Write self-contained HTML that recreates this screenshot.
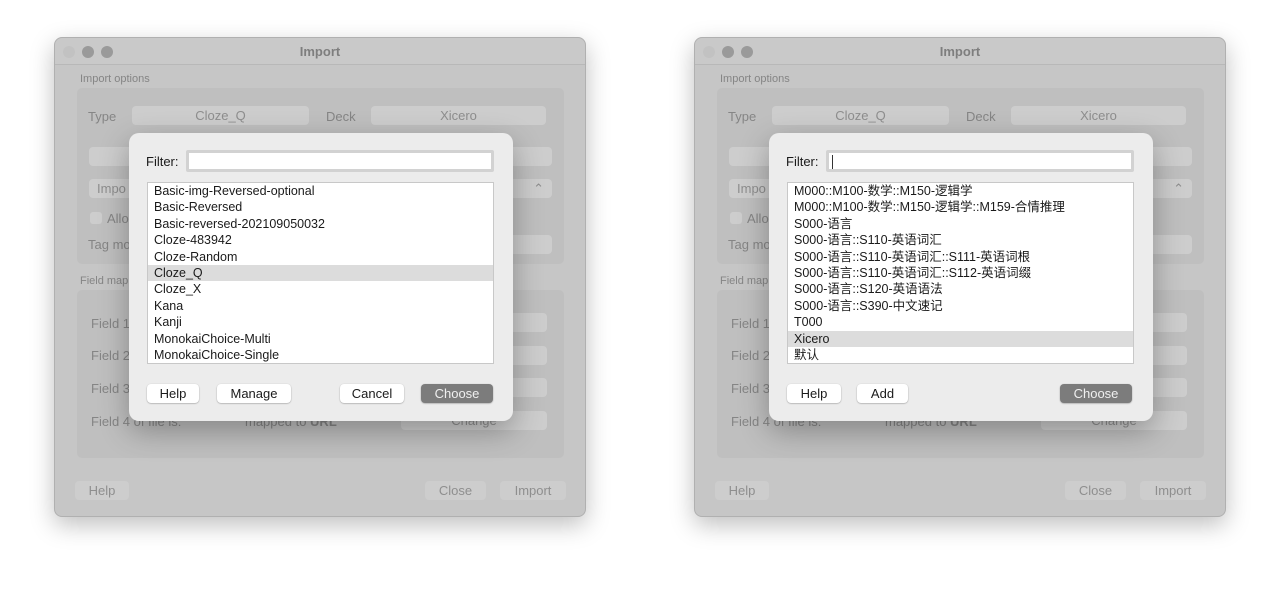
<!DOCTYPE html>
<html><head><meta charset="utf-8"><style>
*{margin:0;padding:0;box-sizing:border-box}
body{width:1280px;height:589px;background:#fff;position:relative;overflow:hidden;font-family:"Liberation Sans","Noto Sans CJK SC",sans-serif;font-size:13px}
.a{position:absolute}
.win{position:absolute;top:37px;width:532px;height:480px;background:#c6c6c6;border-radius:8px;box-shadow:0 8px 24px rgba(0,0,0,.25);border:1px solid #b0b0b0}
.tb{position:absolute;left:0;top:0;right:0;height:27px;border-bottom:1px solid #b8b8b8;background:#c9c9c9;border-radius:8px 8px 0 0}
.title{position:absolute;top:6px;left:0;right:0;text-align:center;color:#7e7e7e;font-weight:bold;font-size:13px}
.dot{position:absolute;top:8px;width:12px;height:12px;border-radius:50%;background:#9a9a9a}
.grp{position:absolute;background:#bfbfbf;border-radius:5px}
.gt{color:#858585}
.gb{position:absolute;height:19px;background:#cdcdcd;border-radius:4px;color:#8e8e8e;text-align:center;line-height:19px;font-size:13px}
.dlg{position:absolute;top:133px;width:384px;height:288px;background:#ececec;border-radius:10px;box-shadow:0 10px 30px rgba(0,0,0,.3)}
.inp{position:absolute;left:57px;top:17px;width:308px;height:22px;background:#fff;border:3px solid #d2d2d2;border-radius:2px}
.list{position:absolute;left:18px;top:49px;width:347px;height:182px;background:#fff;border:1px solid #c8c8c8}
.it{height:16.4px;line-height:16.4px;padding-left:6px;color:#1a1a1a;font-size:12.5px;white-space:nowrap}
.sel{background:#dcdcdc}
.btn{position:absolute;top:251px;height:19px;background:#fff;border-radius:4px;box-shadow:0 0.5px 1.5px rgba(0,0,0,.35);text-align:center;line-height:19px;color:#1a1a1a;font-size:13px}
.btn.p{background:#7c7c7c;color:#f0f0f0}
</style></head><body>

<!-- LEFT -->
<div class="win" style="left:54px">
<div class="tb"><div class="dot" style="left:8px;background:#c2c2c2"></div><div class="dot" style="left:27px"></div><div class="dot" style="left:46px"></div><div class="title">Import</div></div>
<div class="a gt" style="left:25px;top:35px;font-size:11px">Import options</div>
<div class="grp" style="left:22px;top:50px;width:487px;height:176px"></div>
<div class="a gt" style="left:33px;top:71px">Type</div>
<div class="gb" style="left:77px;top:68px;width:177px">Cloze_Q</div>
<div class="a gt" style="left:271px;top:71px">Deck</div>
<div class="gb" style="left:316px;top:68px;width:175px">Xicero</div>
<div class="gb" style="left:34px;top:109px;width:463px"></div>
<div class="gb" style="left:34px;top:141px;width:463px;text-align:left;padding-left:8px">Impo<span style="position:absolute;right:8px">⌃</span></div>
<div class="a" style="left:35px;top:174px;width:12px;height:12px;background:#cdcdcd;border-radius:3px"></div>
<div class="a gt" style="left:52px;top:173px">Allo</div>
<div class="a gt" style="left:33px;top:199px">Tag mo</div>
<div class="gb" style="left:346px;top:197px;width:151px"></div>
<div class="a gt" style="left:25px;top:237px;font-size:11px">Field map</div>
<div class="grp" style="left:22px;top:252px;width:487px;height:168px"></div>
<div class="a gt" style="left:36px;top:278px">Field 1</div><div class="gb" style="left:346px;top:275px;width:146px"></div>
<div class="a gt" style="left:36px;top:310px">Field 2</div><div class="gb" style="left:346px;top:308px;width:146px"></div>
<div class="a gt" style="left:36px;top:343px">Field 3</div><div class="gb" style="left:346px;top:340px;width:146px"></div>
<div class="a gt" style="left:36px;top:376px">Field 4 of file is:</div><div class="a gt" style="left:190px;top:376px">mapped to <b>URL</b></div><div class="gb" style="left:346px;top:373px;width:146px">Change</div>
<div class="gb" style="left:20px;top:443px;width:54px">Help</div>
<div class="gb" style="left:370px;top:443px;width:61px">Close</div>
<div class="gb" style="left:445px;top:443px;width:66px">Import</div>
</div>
<div class="dlg" style="left:129px">
<div class="a" style="left:17px;top:21px;color:#1a1a1a">Filter:</div>
<div class="inp"></div>
<div class="list">
<div class="it">Basic-img-Reversed-optional</div>
<div class="it">Basic-Reversed</div>
<div class="it">Basic-reversed-202109050032</div>
<div class="it">Cloze-483942</div>
<div class="it">Cloze-Random</div>
<div class="it sel">Cloze_Q</div>
<div class="it">Cloze_X</div>
<div class="it">Kana</div>
<div class="it">Kanji</div>
<div class="it">MonokaiChoice-Multi</div>
<div class="it">MonokaiChoice-Single</div>
</div>
<div class="btn" style="left:18px;width:52px">Help</div>
<div class="btn" style="left:88px;width:74px">Manage</div>
<div class="btn" style="left:211px;width:64px">Cancel</div>
<div class="btn p" style="left:292px;width:72px">Choose</div>
</div>

<!-- RIGHT -->
<div class="win" style="left:694px">
<div class="tb"><div class="dot" style="left:8px;background:#c2c2c2"></div><div class="dot" style="left:27px"></div><div class="dot" style="left:46px"></div><div class="title">Import</div></div>
<div class="a gt" style="left:25px;top:35px;font-size:11px">Import options</div>
<div class="grp" style="left:22px;top:50px;width:487px;height:176px"></div>
<div class="a gt" style="left:33px;top:71px">Type</div>
<div class="gb" style="left:77px;top:68px;width:177px">Cloze_Q</div>
<div class="a gt" style="left:271px;top:71px">Deck</div>
<div class="gb" style="left:316px;top:68px;width:175px">Xicero</div>
<div class="gb" style="left:34px;top:109px;width:463px"></div>
<div class="gb" style="left:34px;top:141px;width:463px;text-align:left;padding-left:8px">Impo<span style="position:absolute;right:8px">⌃</span></div>
<div class="a" style="left:35px;top:174px;width:12px;height:12px;background:#cdcdcd;border-radius:3px"></div>
<div class="a gt" style="left:52px;top:173px">Allo</div>
<div class="a gt" style="left:33px;top:199px">Tag mo</div>
<div class="gb" style="left:346px;top:197px;width:151px"></div>
<div class="a gt" style="left:25px;top:237px;font-size:11px">Field map</div>
<div class="grp" style="left:22px;top:252px;width:487px;height:168px"></div>
<div class="a gt" style="left:36px;top:278px">Field 1</div><div class="gb" style="left:346px;top:275px;width:146px"></div>
<div class="a gt" style="left:36px;top:310px">Field 2</div><div class="gb" style="left:346px;top:308px;width:146px"></div>
<div class="a gt" style="left:36px;top:343px">Field 3</div><div class="gb" style="left:346px;top:340px;width:146px"></div>
<div class="a gt" style="left:36px;top:376px">Field 4 of file is:</div><div class="a gt" style="left:190px;top:376px">mapped to <b>URL</b></div><div class="gb" style="left:346px;top:373px;width:146px">Change</div>
<div class="gb" style="left:20px;top:443px;width:54px">Help</div>
<div class="gb" style="left:370px;top:443px;width:61px">Close</div>
<div class="gb" style="left:445px;top:443px;width:66px">Import</div>
</div>
<div class="dlg" style="left:769px">
<div class="a" style="left:17px;top:21px;color:#1a1a1a">Filter:</div>
<div class="inp"><div class="a" style="left:3px;top:2px;width:1px;height:14px;background:#333"></div></div>
<div class="list">
<div class="it">M000::M100-数学::M150-逻辑学</div>
<div class="it">M000::M100-数学::M150-逻辑学::M159-合情推理</div>
<div class="it">S000-语言</div>
<div class="it">S000-语言::S110-英语词汇</div>
<div class="it">S000-语言::S110-英语词汇::S111-英语词根</div>
<div class="it">S000-语言::S110-英语词汇::S112-英语词缀</div>
<div class="it">S000-语言::S120-英语语法</div>
<div class="it">S000-语言::S390-中文速记</div>
<div class="it">T000</div>
<div class="it sel">Xicero</div>
<div class="it">默认</div>
</div>
<div class="btn" style="left:18px;width:54px">Help</div>
<div class="btn" style="left:88px;width:51px">Add</div>
<div class="btn p" style="left:291px;width:72px">Choose</div>
</div>
</body></html>
